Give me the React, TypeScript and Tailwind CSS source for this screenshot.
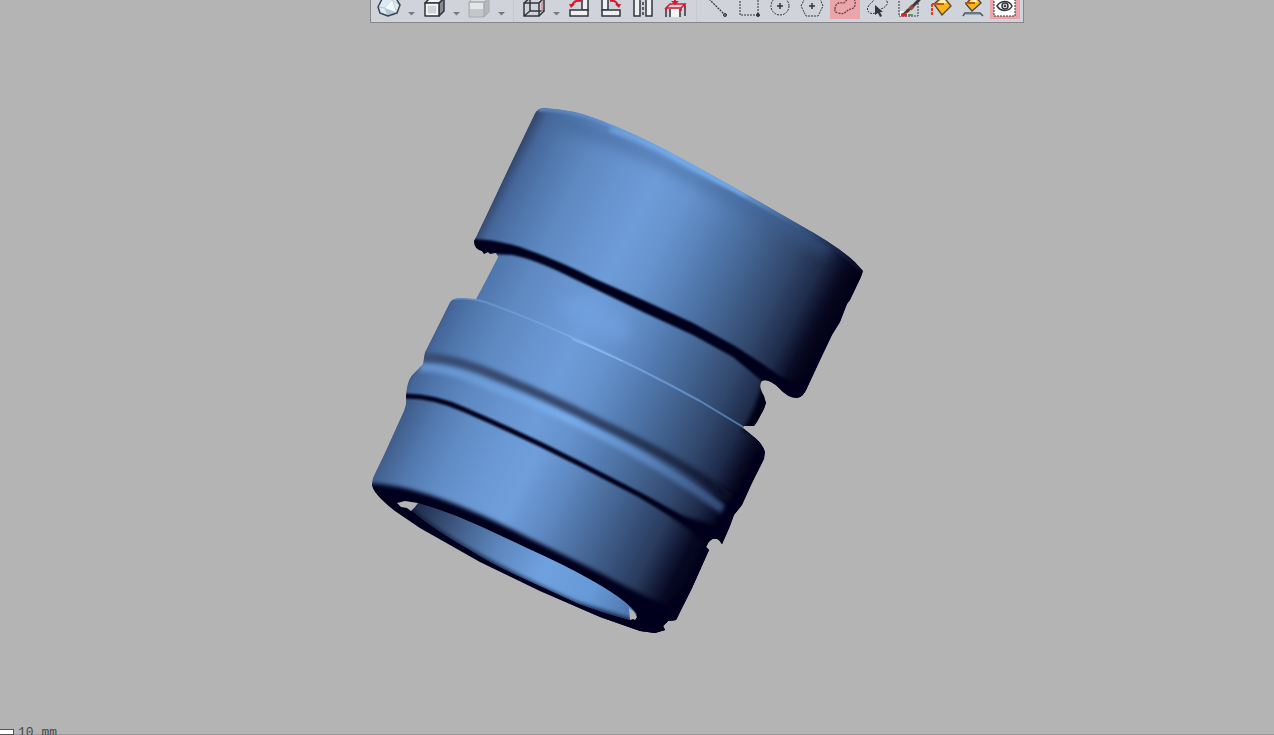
import { ReactNode } from 'react';
import { clsx } from 'clsx';

const DARK = '#30353c';
const RED = '#d3192f';

interface Tool {
  name: string;
  icon: ReactNode;
  menu?: boolean;
  active?: boolean;
}

const viewTools: Tool[] = [
  {
    name: 'Shading mode',
    menu: true,
    icon: (
      <g strokeLinejoin="round">
        <path d="M-11 7 -6-3 5-5 11 5 8 13-1 16-9 13Z" fill="#dcebf3" />
        <path d="M-6-3 3 0 11 5M3 0-4 8-11 7M-4 8-1 16M-4 8 8 13 3 0" fill="none" stroke="#b6c8d3" />
        <path d="M-4 8 8 13-1 16Z" fill="#b2c9d8" />
        <path d="M-4 8 3 0 7 12Z" fill="#f2f9fc" />
        <path d="M-11 7 -6-3 5-5 11 5 8 13-1 16-9 13Z" fill="none" stroke="#3d464f" strokeWidth="1.5" />
      </g>
    ),
  },
  {
    name: 'Solid view',
    menu: true,
    icon: (
      <g stroke={DARK} strokeWidth="1.5" strokeLinejoin="round">
        <path d="M5 3 10-2V11L5 16Z" fill="#868b92" />
        <path d="M-9 3-4-2H10L5 3Z" fill="#f4f5f6" />
        <path d="M-9 3H5V16H-9Z" fill="#eceef0" />
        <path d="M-7 5H3V14H-7Z" fill="#cfd3d7" stroke="#fff" strokeWidth="1" />
      </g>
    ),
  },
  {
    name: 'Transparent view',
    menu: true,
    icon: (
      <g stroke="#a6a9ad" strokeLinejoin="round">
        <path d="M5 2 10-2V12L5 17Z" fill="#b4b7bb" />
        <path d="M-10 2-6-2H10L5 2Z" fill="#dcdee0" />
        <path d="M-10 2H5V17H-10Z" fill="#c3c6ca" />
        <path d="M-9 3H4V9H-9Z" fill="#e3e5e7" stroke="none" />
      </g>
    ),
  },
];

const orientTools: Tool[] = [
  {
    name: 'Standard views',
    menu: true,
    icon: (
      <g fill="none" stroke={DARK} strokeWidth="1.5">
        <path d="M-10 3H5V16H-10ZM-4-2H10V11H-4ZM-10 3-4-2M5 3 10-2M-10 16-4 11M5 16 10 11" />
        <path d="M8 1V12" stroke="#d98a96" />
      </g>
    ),
  },
  {
    name: 'Rotate left',
    icon: (
      <g fill="#eef0f2" stroke={DARK} strokeWidth="1.5">
        <path d="M3-8H9V10H3Z" />
        <path d="M-9 10H9V16H-9Z" />
        <path d="M2 1C-3 0-6 2-7 6" fill="none" stroke={RED} strokeWidth="2" />
        <path d="M-10 4H-4L-8 8Z" fill={RED} stroke="none" />
      </g>
    ),
  },
  {
    name: 'Rotate right',
    icon: (
      <g fill="#eef0f2" stroke={DARK} strokeWidth="1.5">
        <path d="M-9-8H-3V10H-9Z" />
        <path d="M-9 10H9V16H-9Z" />
        <path d="M-1 1C4 0 6 2 7 6" fill="none" stroke={RED} strokeWidth="2" />
        <path d="M4 4H10L8 8Z" fill={RED} stroke="none" />
      </g>
    ),
  },
  {
    name: 'Flip view',
    icon: (
      <g fill="#eef0f2" stroke={DARK} strokeWidth="1.5">
        <path d="M-9-8H-3V16H-9ZM3-8H9V16H3Z" />
        <path d="M0-8V17" strokeDasharray="3 2" />
      </g>
    ),
  },
  {
    name: 'View normal to',
    icon: (
      <g strokeWidth="1.5">
        <path d="M-4 9H4V17H-4Z" fill="#f3f4f5" />
        <path d="M-9 17V9M-5 17V9M5 17V9M10 16V6" fill="none" stroke={DARK} />
        <path d="M-9 8-5 4H10L6 8ZM-9 8V11M6 8V11M10 4V8" fill="none" stroke={RED} />
        <path d="M0-8V3" stroke={RED} strokeWidth="2" />
        <path d="M-4 1H4L0 5Z" fill={RED} />
      </g>
    ),
  },
];

const selectTools: Tool[] = [
  {
    name: 'Line select',
    icon: (
      <g fill="none" stroke={DARK}>
        <path d="M-10-3 7 14" strokeDasharray="2 1" strokeWidth="1.3" />
        <circle cx="8" cy="15" r="1.5" fill="#777" />
      </g>
    ),
  },
  {
    name: 'Rectangle select',
    icon: (
      <g fill="none" stroke={DARK}>
        <path d="M-9-5V15H9V-5" strokeDasharray="2 1" />
        <circle cx="9" cy="15" r="1.5" fill={DARK} />
      </g>
    ),
  },
  {
    name: 'Circle select',
    icon: (
      <g fill="none" stroke={DARK}>
        <circle cx="-1" cy="6" r="9" strokeDasharray="2 1" />
        <path d="M-4 6H2M-1 3V9" strokeWidth="1.5" />
      </g>
    ),
  },
  {
    name: 'Polygon select',
    icon: (
      <g fill="none" stroke={DARK}>
        <path d="M-12 6-7-4H6L10 6 5 16H-7Z" strokeDasharray="2 1" />
        <path d="M-4 6H2M-1 3V9" strokeWidth="1.5" />
      </g>
    ),
  },
  {
    name: 'Lasso select',
    active: true,
    icon: (
      <path
        d="M-10 9C-10 4-6 2-3 3S1 0 4-3 11 0 10 5 5 8 2 11-3 14-7 13-10 11-10 9Z"
        fill="none"
        stroke="#70353d"
        strokeDasharray="2 1"
        strokeWidth="1.2"
      />
    ),
  },
  {
    name: 'Pick select',
    icon: (
      <g fill="none" stroke={DARK}>
        <path d="M-2 13C-7 15-11 11-9 7S-6 4-4 1 4-4 8-1 11 6 4 9" strokeDasharray="2 1" />
        <path d="M-2 5V15L1 13 3 17 5 16 3 12H6Z" fill={DARK} stroke="none" />
      </g>
    ),
  },
  {
    name: 'Paint brush',
    icon: (
      <g fill="none">
        <path d="M-10-5V16H9V-5" stroke={DARK} strokeDasharray="2 1" />
        <path d="M-9 11H-1V16H-9Z" fill="#fff" />
        <path d="M-8 15H-2" stroke="#e3203c" strokeWidth="3" />
        <path d="M-1 15H4" stroke="#46a056" strokeWidth="2" />
        <path d="M10 0 4 6" stroke="#40343b" strokeWidth="3" strokeLinecap="round" />
        <path d="M4 6 1 9" stroke="#9b4a32" strokeWidth="4" />
        <path d="M2 9C0 13-3 14-7 14-4 12-3 9 0 8Z" fill="#5b3730" />
      </g>
    ),
  },
  {
    name: 'Flood fill',
    icon: (
      <g fill="none">
        <path d="M-7 4 2-4 10 6 1 15Z" fill="#f5b816" stroke="#564326" strokeWidth="1.3" />
        <path d="M-4 4 2-2 6 3Z" fill="#fff2bd" />
        <path d="M-9 4H3" stroke="#c74e23" strokeWidth="2" />
        <path d="M-9 4V15" stroke="#d64220" strokeWidth="2" strokeDasharray="3 1" />
      </g>
    ),
  },
  {
    name: 'Fill region',
    icon: (
      <g fill="none">
        <path d="M-7 4 1-5 8 3-1 11Z" fill="#f5b816" stroke="#564326" strokeWidth="1.3" />
        <path d="M-4 3 1-3 5 2Z" fill="#fff2bd" />
        <path d="M-8 3H2" stroke="#b75724" strokeWidth="2" />
        <path d="M-10 16-8 13H7L10 16" stroke="#48515a" strokeWidth="1.5" />
        <path d="M-7 14H7" stroke="#5b82ae" strokeWidth="1" />
      </g>
    ),
  },
  {
    name: 'Visible only',
    active: true,
    icon: (
      <g fill="none" stroke={DARK}>
        <path d="M-11-5V16H10V-5Z" fill="#fff" strokeDasharray="2 1" />
        <path d="M-8 6C-4 0 4 0 7 6 4 12-4 12-8 6Z" strokeWidth="1.5" />
        <circle cx="0" cy="6" r="3" strokeWidth="1.5" />
        <circle cx="0" cy="6" r="1" fill={DARK} />
      </g>
    ),
  },
];

function ToolGroup({ tools }: { tools: Tool[] }) {
  return (
    <div className="flex">
      {tools.map((tool) => (
        <div key={tool.name} className="flex">
          <button type="button" aria-label={tool.name} className="w-8 h-[30px] px-px">
            <span className={clsx('block h-full overflow-hidden', tool.active && 'bg-[#e9a5a9]')}>
              <svg viewBox="-15 -11 30 30" className="w-[30px] h-[30px]">
                {tool.icon}
              </svg>
            </span>
          </button>
          {tool.menu && (
            <button type="button" aria-label={`${tool.name} options`} className="w-[13px] h-[30px]">
              <svg viewBox="0 -11 13 30" className="w-[13px] h-[30px]">
                <path d="M3 12H10L6.5 15.5Z" fill="#777a7e" />
              </svg>
            </button>
          )}
        </div>
      ))}
    </div>
  );
}

function Toolbar() {
  return (
    <div
      role="toolbar"
      className="flex h-[34px] -mt-[11px] pl-0.5 pr-0.5 bg-[#d0d4da] border border-t-0 border-[#85878a]"
    >
      <ToolGroup tools={viewTools} />
      <span className="w-[10px] flex justify-center">
        <span className="w-px bg-[#c6cacf]" />
      </span>
      <ToolGroup tools={orientTools} />
      <span className="w-[10px] flex justify-center">
        <span className="w-px bg-[#c6cacf]" />
      </span>
      <ToolGroup tools={selectTools} />
    </div>
  );
}

const OUTLINE =
  'M535 113Q538 108 544 108Q572 109 600 120Q636 134 670 152L712 175L760 202L800 225Q838 246 855 262L863 271L861 277L850 300L847 304L840 322L832 335L822 356L808 386Q803 398 797 398Q787 398 779 388Q768 378 762 381Q758 386 764 396L766 403L764 409L757 422L754 426L744 426L743 428L752 435Q763 443 765 452L764 459L752 483L742 505L734 515L730 526L722 544L719 540Q713 536 708 543L706 547L709 550L692 588L676 620L668 621L663 626L665 630L655 633L640 631L600 617L540 591L480 562L420 528L395 511Q372 493 372 484L373 478L385 453L404 411Q407 404 406 398Q406 382 412 375L423 364L425 352L440 322L450 302Q453 298 460 298L476 299L485 282L498 257L496 253L490 254L488 252L484 254L482 251Q474 249 474 241L485 218L510 165Z';

function Model() {
  return (
    <svg viewBox="0 23 1274 702" role="img" aria-label="Scanned mesh" className="flex-1 min-h-0 w-full">
      <defs>
        <linearGradient id="body" gradientUnits="userSpaceOnUse" x1="540" y1="108" x2="860" y2="270">
          <stop offset="0" stopColor="#344a70" />
          <stop offset="0.03" stopColor="#46669a" />
          <stop offset="0.09" stopColor="#5078ae" />
          <stop offset="0.18" stopColor="#5d88c0" />
          <stop offset="0.28" stopColor="#6793ce" />
          <stop offset="0.38" stopColor="#6e9cd8" />
          <stop offset="0.48" stopColor="#6693cd" />
          <stop offset="0.58" stopColor="#567fb6" />
          <stop offset="0.7" stopColor="#446593" />
          <stop offset="0.82" stopColor="#31476c" />
          <stop offset="0.9" stopColor="#1e2b4a" />
          <stop offset="0.95" stopColor="#0a0d27" />
          <stop offset="0.98" stopColor="#04041a" />
        </linearGradient>
        <linearGradient id="lower" gradientUnits="userSpaceOnUse" x1="408" y1="400" x2="704" y2="550">
          <stop offset="0" stopColor="#3f5b88" />
          <stop offset="0.1" stopColor="#527ab0" />
          <stop offset="0.2" stopColor="#618dc6" />
          <stop offset="0.32" stopColor="#6b99d5" />
          <stop offset="0.42" stopColor="#6f9edb" />
          <stop offset="0.55" stopColor="#5d87bf" />
          <stop offset="0.7" stopColor="#446492" />
          <stop offset="0.86" stopColor="#293b5e" />
          <stop offset="0.96" stopColor="#060720" />
        </linearGradient>
        <linearGradient id="bore" gradientUnits="userSpaceOnUse" x1="412" y1="505" x2="636" y2="618">
          <stop offset="0" stopColor="#1c2848" />
          <stop offset="0.18" stopColor="#3d577f" />
          <stop offset="0.38" stopColor="#5d86bd" />
          <stop offset="0.58" stopColor="#70a1df" />
          <stop offset="0.8" stopColor="#6699d7" />
          <stop offset="1" stopColor="#4c70a5" />
        </linearGradient>
        <linearGradient id="shine" gradientUnits="userSpaceOnUse" x1="424" y1="360" x2="730" y2="515">
          <stop offset="0" stopColor="#6290ca" />
          <stop offset="0.45" stopColor="#79adec" />
          <stop offset="0.7" stopColor="#5b87c0" />
          <stop offset="1" stopColor="#2d436b" />
        </linearGradient>
        <linearGradient id="crease" gradientUnits="userSpaceOnUse" x1="424" y1="355" x2="735" y2="505">
          <stop offset="0" stopColor="#3a4d74" />
          <stop offset="0.5" stopColor="#33466b" />
          <stop offset="0.8" stopColor="#1c2846" />
          <stop offset="1" stopColor="#06071c" />
        </linearGradient>
        <linearGradient id="ridge" gradientUnits="userSpaceOnUse" x1="460" y1="298" x2="745" y2="428">
          <stop offset="0" stopColor="#6089c3" />
          <stop offset="0.45" stopColor="#7eb0ee" />
          <stop offset="1" stopColor="#4a75a8" />
        </linearGradient>
        <linearGradient id="rim" gradientUnits="userSpaceOnUse" x1="544" y1="108" x2="855" y2="262">
          <stop offset="0" stopColor="#5680b8" />
          <stop offset="0.4" stopColor="#72a6e8" />
          <stop offset="0.62" stopColor="#6799d8" />
          <stop offset="0.85" stopColor="#2f4973" />
          <stop offset="1" stopColor="#0a0d27" />
        </linearGradient>
        <filter id="soft1" x="-10%" y="-10%" width="120%" height="120%">
          <feGaussianBlur stdDeviation="1" />
        </filter>
        <filter id="soft2" x="-10%" y="-10%" width="120%" height="120%">
          <feGaussianBlur stdDeviation="2" />
        </filter>
        <filter id="soft6" x="-60%" y="-60%" width="220%" height="220%">
          <feGaussianBlur stdDeviation="6" />
        </filter>
        <clipPath id="outline">
          <path d={OUTLINE} />
        </clipPath>
        <clipPath id="boreEdge">
          <path d="M411 510L418 503Q450 512 480 526L527 548Q565 565 593 581Q630 602 637 615L630 620Q600 612 577 603L527 580Q490 563 470 550Q430 527 411 510Z" />
        </clipPath>
      </defs>

      <g clipPath="url(#outline)">
        <path d={OUTLINE} fill="url(#body)" />

        {/* neck between the two collars */}
        <ellipse cx="595" cy="318" rx="40" ry="14" transform="rotate(26 595 318)" fill="#72a3e2" opacity="0.5" filter="url(#soft6)" />
        <path d="M764 378L775 400L765 432H742Q756 410 764 378Z" fill="#050619" filter="url(#soft2)" />

        {/* top rim */}
        <path d="M560 122Q610 136 660 160L740 202L830 250" fill="none" stroke="#3c5f92" strokeWidth="16" opacity="0.4" filter="url(#soft6)" />
        <path d="M538 109Q572 109 602 121Q640 136 680 159L712 177L760 204L800 227Q838 247 862 271" fill="none" stroke="url(#rim)" strokeWidth="5" filter="url(#soft1)" />
        <path d="M610 129Q650 143 690 167Q718 181 748 194" fill="none" stroke="#77ade9" strokeWidth="5" opacity="0.8" filter="url(#soft2)" />

        {/* lower sleeve */}
        <path d="M400 396Q430 397 465 412Q540 444 600 476Q660 508 720 543L720 640H360V480Z" fill="url(#lower)" />

        {/* bead */}
        <path d="M420 367Q450 367 490 386Q550 408 600 434Q670 469 732 516" fill="none" stroke="url(#shine)" strokeWidth="9" filter="url(#soft2)" />
        <path d="M420 357Q445 356 482 370Q545 395 600 423Q660 451 700 477L738 504" fill="none" stroke="url(#crease)" strokeWidth="9" filter="url(#soft2)" />
        <path d="M402 396Q432 395 465 410Q525 436 580 464L640 495L690 524L722 545" fill="none" stroke="#04051a" strokeWidth="5" filter="url(#soft1)" />
        <path d="M640 494L680 515L732 530L722 560L690 530Z" fill="#04051a" filter="url(#soft2)" />

        {/* collar edge */}
        <path d="M452 299Q470 297 485 302Q530 318 580 341Q640 368 700 401L748 430" fill="none" stroke="url(#ridge)" strokeWidth="2" />
        <path d="M572 339L622 361" stroke="#90bbec" />

        {/* shadow under the top section */}
        <path d="M470 239Q494 239 520 247Q560 261 593 278L643 300L693 323L735 346Q760 362 780 376L812 390L800 402L762 381L733 357L693 335L643 312L593 288L560 272Q530 258 512 255L494 254L480 258L468 246Z" fill="#04041a" filter="url(#soft1)" />

        {/* right hand side shadow */}
        <path d="M866 266L855 275Q840 315 808 366L795 392L808 405L875 270Z" fill="#04041a" filter="url(#soft2)" />
        <path d="M770 445L755 452Q746 480 727 502L717 520L704 540L730 550L775 465Z" fill="#04041a" filter="url(#soft2)" />
        <path d="M712 540L700 548Q690 580 665 606L662 640L720 560Z" fill="#04041a" filter="url(#soft2)" />

        {/* open end */}
        <path d="M368 483Q395 484 430 495Q475 510 527 537Q570 558 600 573Q635 592 682 613L675 645H360Z" fill="#04041a" filter="url(#soft2)" />
        <g clipPath="url(#boreEdge)">
          <path d="M405 498H645V625H405Z" fill="url(#bore)" />
          <path d="M409 511Q440 535 470 552Q520 580 577 605L632 622" fill="none" stroke="#0c1231" strokeWidth="5" filter="url(#soft2)" />
        </g>
      </g>

      {/* holes in the scan */}
      <path d="M397 503L405 501L418 503L415 507L411 511L407 508L401 507Z" fill="#b4b4b4" />
      <path d="M629 608L634 612L637 617L635 620L633 619L630 620Z" fill="#b4b4b4" />
    </svg>
  );
}

export default function App() {
  return (
    <div className="flex flex-col h-screen overflow-hidden bg-[#b4b4b4]">
      <header className="flex shrink-0 pl-[370px]">
        <Toolbar />
      </header>
      <Model />
      <footer className="flex items-start h-[10px] shrink-0 border-b border-[#999999]">
        <span className="mt-[4px] w-[14px] h-[6px] bg-white border border-l-0 border-[#555555]" />
        <span className="pt-px pl-1 font-['Liberation_Mono',monospace] text-[13px] leading-[14px] text-[#484848]">10 mm</span>
      </footer>
    </div>
  );
}
